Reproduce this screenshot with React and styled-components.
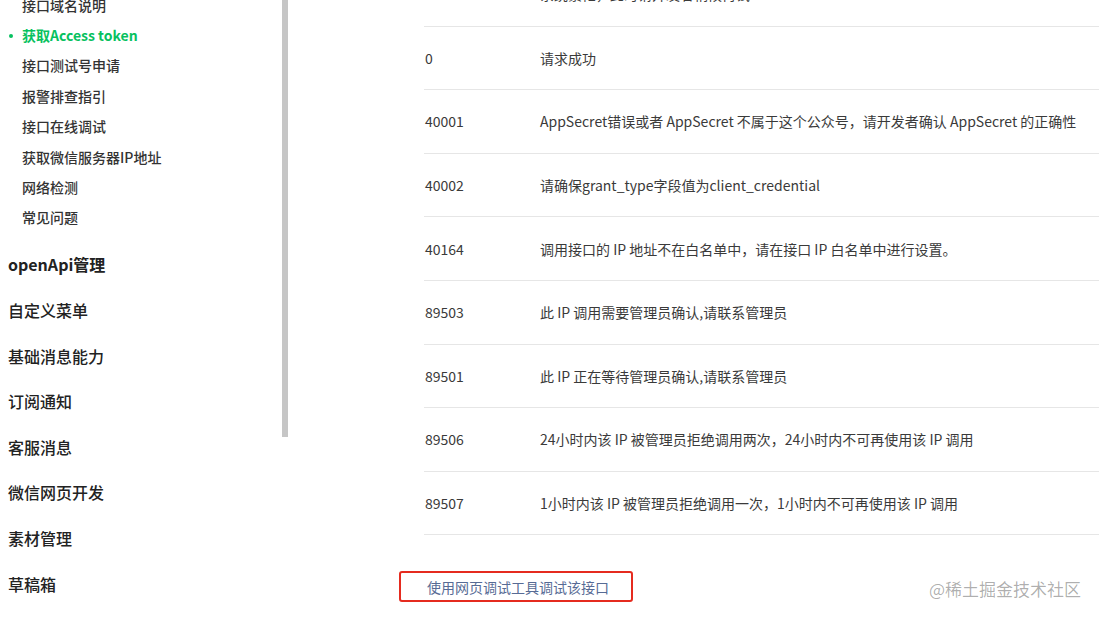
import React from "react";
import styled, { createGlobalStyle } from "styled-components";

const GlobalStyle = createGlobalStyle`
  html, body {
    margin: 0;
    padding: 0;
    background: #fff;
  }
  body {
    font-family: "Noto Sans CJK SC", "Noto Sans", sans-serif;
    overflow: hidden;
  }
  * {
    box-sizing: border-box;
  }
`;

const subItems = [
  { label: "接口域名说明" },
  { label: "获取Access token", active: true },
  { label: "接口测试号申请" },
  { label: "报警排查指引" },
  { label: "接口在线调试" },
  { label: "获取微信服务器IP地址" },
  { label: "网络检测" },
  { label: "常见问题" },
];

const topItems = [
  "openApi管理",
  "自定义菜单",
  "基础消息能力",
  "订阅通知",
  "客服消息",
  "微信网页开发",
  "素材管理",
  "草稿箱",
];

// first row is scrolled mostly out of view, only the bottom of its text shows
const rows = [
  ["", "系统繁忙，此时请开发者稍候再试"],
  ["0", "请求成功"],
  ["40001", "AppSecret错误或者 AppSecret 不属于这个公众号，请开发者确认 AppSecret 的正确性"],
  ["40002", "请确保grant_type字段值为client_credential"],
  ["40164", "调用接口的 IP 地址不在白名单中，请在接口 IP 白名单中进行设置。"],
  ["89503", "此 IP 调用需要管理员确认,请联系管理员"],
  ["89501", "此 IP 正在等待管理员确认,请联系管理员"],
  ["89506", "24小时内该 IP 被管理员拒绝调用两次，24小时内不可再使用该 IP 调用"],
  ["89507", "1小时内该 IP 被管理员拒绝调用一次，1小时内不可再使用该 IP 调用"],
];

const App = () => {
  return (
    <Page>
      <GlobalStyle />
      <Sidebar>
        <SubList>
          {subItems.map((item) => (
            <SubItem key={item.label} $active={item.active}>
              {item.label}
            </SubItem>
          ))}
        </SubList>
        <TopList>
          {topItems.map((label) => (
            <TopItem key={label} $strong={label === "openApi管理"}>
              {label}
            </TopItem>
          ))}
        </TopList>
      </Sidebar>
      <ScrollTrack>
        <Thumb />
      </ScrollTrack>
      <Main>
        <Table>
          {rows.map(([code, desc]) => (
            <Row key={desc}>
              <Code>{code}</Code>
              <Desc>{desc}</Desc>
            </Row>
          ))}
        </Table>
        <DebugLink>使用网页调试工具调试该接口</DebugLink>
      </Main>
      <Watermark>@稀土掘金技术社区</Watermark>
    </Page>
  );
};

const Page = styled.div`
  position: relative;
  display: flex;
  height: 617px;
  width: 1099px;
  overflow: hidden;
  background: #fff;
`;

const Sidebar = styled.nav`
  width: 282px;
  flex-shrink: 0;
  margin-top: -10.5px;
`;

const SubList = styled.div`
  display: flex;
  flex-direction: column;
`;

const SubItem = styled.div`
  position: relative;
  height: 30.4px;
  display: flex;
  align-items: center;
  padding-left: 22px;
  font-size: 14px;
  font-weight: 500;
  color: ${(p) => (p.$active ? "#07c160" : "#333")};
  ${(p) =>
    p.$active &&
    `
    font-weight: 700;
    &::before {
      content: "";
      position: absolute;
      left: 9px;
      top: 50%;
      width: 4px;
      height: 4px;
      margin-top: -1px;
      border-radius: 50%;
      background: #07c160;
    }
  `}
`;

const TopList = styled.div`
  display: flex;
  flex-direction: column;
  margin-top: 9px;
`;

const TopItem = styled.div`
  height: 45.6px;
  display: flex;
  align-items: center;
  padding-left: 8px;
  font-size: 16px;
  font-weight: ${(p) => (p.$strong ? 700 : 500)};
  color: #222;
`;

const ScrollTrack = styled.div`
  width: 6px;
  flex-shrink: 0;
`;

const Thumb = styled.div`
  height: 437px;
  background: #c6c6c6;
`;

const Main = styled.main`
  flex: 1;
  margin-left: 136px;
  margin-top: -37px;
`;

const Table = styled.div`
  display: flex;
  flex-direction: column;
`;

const Row = styled.div`
  display: grid;
  grid-template-columns: 116px 1fr;
  align-items: center;
  height: 63.6px;
  border-bottom: 1px solid #e6e6e6;
  font-size: 14px;
  color: #3a3a3a;
`;

const Code = styled.div`
  padding-left: 1px;
`;

const Desc = styled.div`
  white-space: nowrap;
`;

const DebugLink = styled.div`
  margin-top: 36px;
  margin-left: -25px;
  width: 234px;
  height: 31px;
  display: flex;
  align-items: center;
  padding-left: 26px;
  border: 2px solid #e52b1f;
  border-radius: 3px;
  font-size: 14px;
  color: #576b95;
`;

const Watermark = styled.div`
  position: absolute;
  right: 18px;
  top: 576px;
  font-size: 17px;
  color: rgba(0, 0, 0, 0.33);
  pointer-events: none;
`;

export default App;
